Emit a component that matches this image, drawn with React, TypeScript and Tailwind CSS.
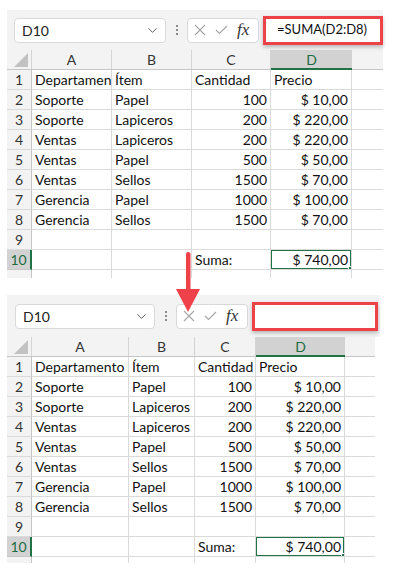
import { ChevronDown } from "lucide-react"

type SheetConfig = {
  colW: string[]
  extraW: string
  gridW: string
  barW: string
  barH: string
  nameMl: string
  nameW: string
  inputW: string
  tailH: string
  formula: string
}

const rows = [
  ["Departamento", "Ítem", "Cantidad", "Precio"],
  ["Soporte", "Papel", "100", "$ 10,00"],
  ["Soporte", "Lapiceros", "200", "$ 220,00"],
  ["Ventas", "Lapiceros", "200", "$ 220,00"],
  ["Ventas", "Papel", "500", "$ 50,00"],
  ["Ventas", "Sellos", "1500", "$ 70,00"],
  ["Gerencia", "Papel", "1000", "$ 100,00"],
  ["Gerencia", "Sellos", "1500", "$ 70,00"],
  ["", "", "", ""],
  ["", "", "Suma:", "$ 740,00"],
]

const letters = ["A", "B", "C", "D"]

const top: SheetConfig = {
  colW: ["w-[80px]", "w-[80px]", "w-[79px]", "w-[81px]"],
  extraW: "w-[31px]",
  gridW: "w-[376px]",
  barW: "w-[376px]",
  barH: "h-[40px]",
  nameMl: "ml-[7px]",
  nameW: "w-[152px]",
  inputW: "w-[120px]",
  tailH: "h-[8px]",
  formula: "=SUMA(D2:D8)",
}

const bottom: SheetConfig = {
  colW: ["w-[97px]", "w-[66px]", "w-[61px]", "w-[89px]"],
  extraW: "w-[30px]",
  gridW: "w-[368px]",
  barW: "w-[373px]",
  barH: "h-[42px]",
  nameMl: "ml-[8px]",
  nameW: "w-[140px]",
  inputW: "w-[126px]",
  tailH: "h-[6px]",
  formula: "",
}

function FormulaBar({ c }: { c: SheetConfig }) {
  return (
    <div className={`${c.barW} ${c.barH} bg-[#f3f3f3] flex items-center`}>
      {/* name box */}
      <div
        className={`${c.nameMl} ${c.nameW} h-[25px] bg-white border border-[#d9d9d9] rounded-[4px] flex items-center justify-between pl-[7px] pr-[5px]`}
      >
        <span className="text-[14px] text-[#222]">D10</span>
        <ChevronDown className="w-[15px] h-[15px] text-[#555]" strokeWidth={1.5} />
      </div>
      {/* dots */}
      <div className="w-[21px] flex flex-col items-center gap-[2px]">
        <span className="w-[2px] h-[2px] bg-[#8a8a8a]" />
        <span className="w-[2px] h-[2px] bg-[#8a8a8a]" />
        <span className="w-[2px] h-[2px] bg-[#8a8a8a]" />
      </div>
      {/* cancel / enter / fx */}
      <div className="w-[72px] h-[25px] bg-white border border-[#d9d9d9] rounded-[4px] flex items-center pl-[6px] gap-[9px]">
        <svg width="12" height="12" viewBox="0 0 12 12" className="text-[#a6a6a6]">
          <path d="M1 1 L11 11 M11 1 L1 11" stroke="currentColor" strokeWidth="1.1" fill="none" />
        </svg>
        <svg width="13" height="10" viewBox="0 0 13 10" className="text-[#a6a6a6]">
          <path d="M1 5 L4.5 8.5 L12 1" stroke="currentColor" strokeWidth="1.1" fill="none" />
        </svg>
        <span className="font-['Liberation_Serif'] italic text-[17px] leading-none text-[#333] -mt-[2px]">fx</span>
      </div>
      {/* formula input with red highlight */}
      <div
        className={`ml-[4px] ${c.inputW} h-[29px] bg-white border-[3px] border-[#ee4249] shadow-[0_2px_4px_rgba(0,0,0,0.25)] flex items-center pl-[11px]`}
      >
        <span className="text-[13px] text-[#111]">{c.formula}</span>
      </div>
    </div>
  )
}

function Grid({ c }: { c: SheetConfig }) {
  return (
    <div className={`${c.gridW} bg-white`}>
      {/* column headers */}
      <div className="flex h-[20px] bg-[#f3f3f3] border-b border-[#c6c6c6]">
        <div className="w-[25px] border-r border-[#d4d4d4] relative">
          <svg width="14" height="14" viewBox="0 0 14 14" className="absolute right-[3px] bottom-[2px]">
            <path d="M14 0 L14 14 L0 14 Z" fill="#c2c2c2" />
          </svg>
        </div>
        {letters.map((l, i) =>
          l === "D" ? (
            <div
              key={l}
              className={`${c.colW[i]} bg-[#d2d2d2] border-b-2 border-[#217346] -mb-px text-[#1e6b41] text-[14px] flex items-center justify-center`}
            >
              {l}
            </div>
          ) : (
            <div
              key={l}
              className={`${c.colW[i]} border-r border-[#d4d4d4] text-[#333] text-[14px] flex items-center justify-center`}
            >
              {l}
            </div>
          ),
        )}
        <div className={`${c.extraW}`} />
      </div>

      {rows.map((r, ri) => {
        const n = ri + 1
        const sel = n === 10
        return (
          <div key={n} className="flex h-[20px]">
            <div
              className={
                sel
                  ? "w-[25px] bg-[#d2d2d2] border-r-2 border-[#217346] border-b border-b-[#c6c6c6] text-[#1e6b41] text-[14px] flex items-center justify-center"
                  : "w-[25px] bg-[#f3f3f3] border-r border-[#c6c6c6] border-b border-b-[#dadada] text-[#333] text-[14px] flex items-center justify-center"
              }
            >
              {n}
            </div>
            {r.map((v, ci) => {
              const right = ri > 0 && ci >= 2 && v !== "Suma:"
              const active = sel && ci === 3
              return (
                <div
                  key={ci}
                  className={`${c.colW[ci]} relative border-r border-b border-[#dadada] px-[3px] flex items-center overflow-hidden whitespace-nowrap text-[14px] text-[#111] ${
                    right ? "justify-end" : "justify-start"
                  }`}
                >
                  {v}
                  {active && (
                    <>
                      <div className="absolute -left-px -top-px -right-px -bottom-px border-2 border-[#217346]" />
                      <div className="absolute -right-[3px] -bottom-[3px] w-[6px] h-[6px] bg-[#217346] border border-white" />
                    </>
                  )}
                </div>
              )
            })}
            <div className={`${c.extraW} border-b border-[#dadada]`} />
          </div>
        )
      })}

      {/* partial next row */}
      <div className={`flex ${c.tailH}`}>
        <div className="w-[25px] bg-[#f3f3f3] border-r border-[#c6c6c6]" />
        {c.colW.map((w, i) => (
          <div key={i} className={`${w} border-r border-[#dadada]`} />
        ))}
      </div>
    </div>
  )
}

export default function App() {
  return (
    <div className="relative w-[393px] h-[578px] bg-white overflow-hidden font-['Lato',sans-serif]">
      <div className="pt-[10px] pl-[7px]">
        <FormulaBar c={top} />
        <Grid c={top} />
      </div>
      <div className="pt-[17px] pl-[7px]">
        <FormulaBar c={bottom} />
        <Grid c={bottom} />
      </div>

      {/* red arrow */}
      <svg width="24" height="60" viewBox="0 0 24 60" className="absolute left-[176px] top-[252px]">
        <rect x="10" y="0" width="4.5" height="40" rx="2.2" fill="#ef4149" />
        <path d="M0 37 L24 37 L12 60 Z" fill="#ef4149" />
      </svg>
    </div>
  )
}
